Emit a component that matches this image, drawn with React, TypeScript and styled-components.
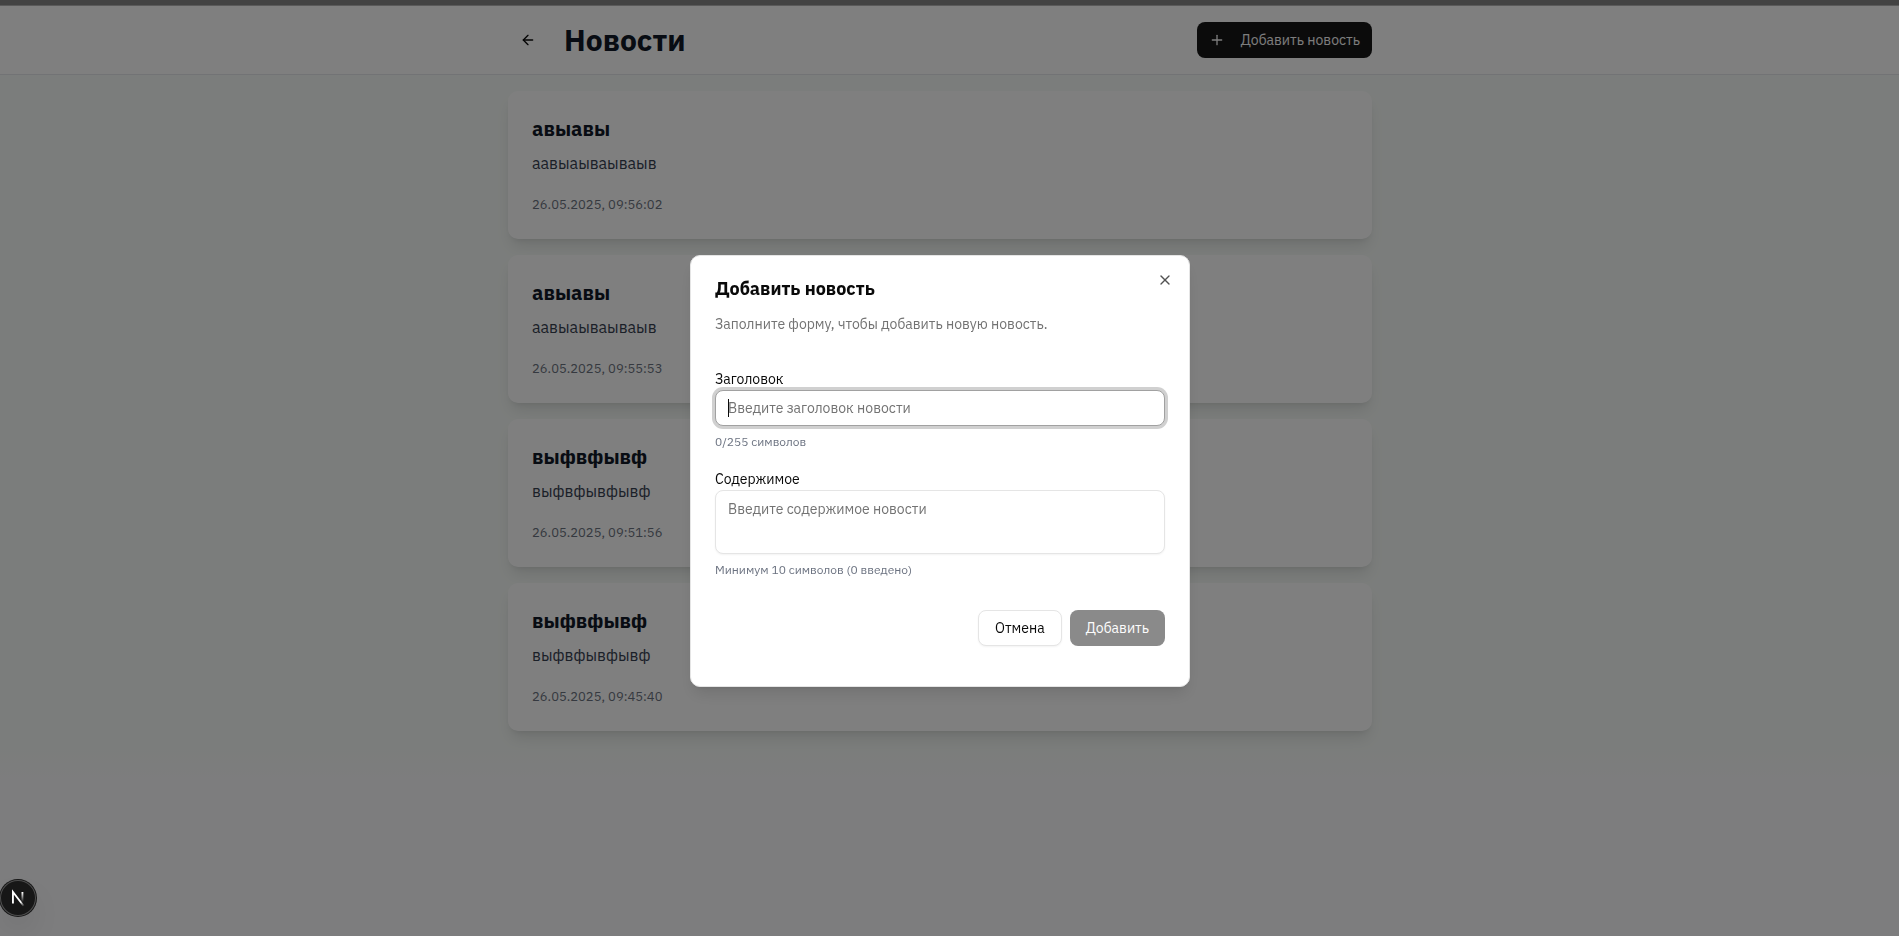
import React, { useId, useState } from 'react';
import styled, { createGlobalStyle, css } from 'styled-components';
import { ArrowLeft, Plus, X } from 'lucide-react';

const GlobalStyle = createGlobalStyle`
  *, *::before, *::after { box-sizing: border-box; }
  body {
    margin: 0;
    color: #0a0a0a;
    font-family: "IBM Plex Sans", Roboto, "Liberation Sans", sans-serif;
    font-size: 16px;
    line-height: 24px;
  }
  h1, h2, h3, p { margin: 0; }
  button, input, textarea { font: inherit; }
`;

const Page = styled.div`
  display: flex;
  flex-direction: column;
  min-height: 100vh;
  background: linear-gradient(to bottom, #f7fbf8 80%, #fbfafd 84%);
`;

const TopStrip = styled.div`
  height: 6px;
  background: #868686;
  border-bottom: 1px solid #b4b4b4;
`;

const Header = styled.header`
  padding-right: 19px;
  background: #fff;
  border-bottom: 1px solid #e5e7eb;
`;

const Container = styled.div`
  width: 100%;
  max-width: 896px;
  margin: 0 auto;
  padding: 16px;
`;

const HeaderRow = styled(Container)`
  display: flex;
  align-items: center;
  justify-content: space-between;
`;

const TitleGroup = styled.div`
  display: flex;
  align-items: center;
  gap: 16px;
`;

const PageTitle = styled.h1`
  color: #111827;
  font-size: 30px;
  font-weight: 700;
  line-height: 36px;
`;

type Variant = 'primary' | 'outline' | 'ghost';

const variants = {
  primary: css`
    color: #fafafa;
    background: #171717;
  `,
  outline: css`
    color: #0a0a0a;
    background: #fff;
    border: 1px solid #e5e5e5;
    box-shadow: 0 1px 2px rgba(0, 0, 0, 0.05);
  `,
  ghost: css`
    color: #0a0a0a;
    background: transparent;
  `,
};

const Button = styled.button<{ $variant: Variant; $compact?: boolean }>`
  display: inline-flex;
  align-items: center;
  justify-content: center;
  gap: 16px;
  height: 36px;
  padding: 0 ${(p) => (p.$compact ? 12 : 16)}px;
  border: 0;
  border-radius: 8px;
  font-size: 14px;
  line-height: 20px;
  white-space: nowrap;
  ${(p) => variants[p.$variant]}
  &:disabled { opacity: 0.5; }
`;

const Main = styled.main`
  padding-right: 19px;
`;

const NewsList = styled(Container)`
  display: flex;
  flex-direction: column;
  gap: 16px;
`;

const NewsCard = styled.article`
  padding: 24px;
  background: #fff;
  border-radius: 10px;
  box-shadow: 0 10px 15px -3px rgba(0, 0, 0, 0.1), 0 4px 6px -4px rgba(0, 0, 0, 0.1);
`;

const NewsTitle = styled.h2`
  margin-bottom: 8px;
  color: #111827;
  font-size: 20px;
  font-weight: 700;
  line-height: 28px;
`;

const NewsText = styled.p`
  margin-bottom: 20px;
  color: #374151;
`;

const NewsDate = styled.time`
  display: block;
  color: #6b7280;
  font-size: 13px;
  line-height: 20px;
`;

const Overlay = styled.div`
  position: fixed;
  inset: 0;
  display: flex;
  align-items: center;
  justify-content: center;
  padding: 6px 19px 0 0;
  background: rgba(0, 0, 0, 0.5);
`;

const Dialog = styled.div`
  position: relative;
  display: flex;
  flex-direction: column;
  gap: 16px;
  width: 100%;
  max-width: 500px;
  padding: 24px;
  background: #fff;
  border: 1px solid #e5e5e5;
  border-radius: 10px;
  box-shadow: 0 10px 15px -3px rgba(0, 0, 0, 0.1), 0 4px 6px -4px rgba(0, 0, 0, 0.1);
`;

const DialogTitle = styled.h2`
  font-size: 18px;
  font-weight: 700;
  line-height: 18px;
`;

const DialogText = styled.p`
  color: #737373;
  font-size: 14px;
  line-height: 20px;
`;

const CloseButton = styled.button`
  position: absolute;
  top: 16px;
  right: 16px;
  display: flex;
  padding: 0;
  color: #0a0a0a;
  background: none;
  border: 0;
  opacity: 0.7;
`;

const Form = styled.form`
  display: flex;
  flex-direction: column;
  gap: 16px;
  padding: 16px 0;
`;

const Field = styled.div`
  display: flex;
  flex-direction: column;
`;

const Label = styled.label`
  padding-top: 2px;
  font-size: 14px;
  line-height: 22px;
`;

const control = css`
  width: 100%;
  padding: 8px 12px;
  color: #0a0a0a;
  background: #fff;
  border: 1px solid #e5e5e5;
  border-radius: 8px;
  box-shadow: 0 1px 2px rgba(0, 0, 0, 0.05);
  font-size: 14px;
  line-height: 20px;
  outline: none;
  &::placeholder { color: #737373; opacity: 1; }
  &:focus {
    border-color: #a1a1a1;
    box-shadow: 0 0 0 3px rgba(161, 161, 161, 0.5);
  }
`;

const InputWrap = styled.div`
  position: relative;
  display: flex;
`;

const TextInput = styled.input`
  ${control}
  height: 36px;
  &:placeholder-shown { caret-color: transparent; }
`;

/* Steady caret shown while the focused field is still empty. */
const Caret = styled.span`
  position: absolute;
  top: 9px;
  left: 13px;
  display: none;
  width: 1px;
  height: 18px;
  background: #0a0a0a;
  pointer-events: none;
  ${TextInput}:focus:placeholder-shown + & { display: block; }
`;

const TextArea = styled.textarea`
  ${control}
  display: block;
  height: 64px;
  resize: none;
`;

const Hint = styled.p`
  margin-top: 8px;
  color: #6b7280;
  font-size: 12px;
  line-height: 16px;
`;

const Actions = styled.div`
  display: flex;
  justify-content: flex-end;
  gap: 8px;
  margin-top: 16px;
`;

const DevBadge = styled.button`
  position: fixed;
  bottom: 20px;
  left: 0;
  width: 36px;
  height: 36px;
  padding: 0;
  background: #171717;
  border: 0;
  border-radius: 50%;
  box-shadow: 0 0 0 1px #171717, inset 0 0 0 1px rgba(255, 255, 255, 0.24),
    0 16px 32px -8px rgba(0, 0, 0, 0.24);
  svg { display: block; }
`;

const news = [
  { title: 'авыавы', text: 'аавыаываываыв', date: '26.05.2025, 09:56:02' },
  { title: 'авыавы', text: 'аавыаываываыв', date: '26.05.2025, 09:55:53' },
  { title: 'выфвфывф', text: 'выфвфывфывф', date: '26.05.2025, 09:51:56' },
  { title: 'выфвфывф', text: 'выфвфывфывф', date: '26.05.2025, 09:45:40' },
];

function NextLogo() {
  return (
    <svg width="36" height="36" viewBox="0 0 36 36" fill="none" aria-hidden="true">
      <g transform="translate(10.6 11)">
        <path d="M13.3 15.2 L2.34 1 V12.6" stroke="url(#badge-diagonal)" strokeWidth="1.86" />
        <path d="M11.825 1 V12.6" stroke="url(#badge-stem)" strokeWidth="1.86" />
      </g>
      <defs>
        <linearGradient id="badge-diagonal" x1="9.96" y1="11.12" x2="15.48" y2="17.97" gradientUnits="userSpaceOnUse">
          <stop stopColor="#fff" />
          <stop offset="0.6" stopColor="#fff" stopOpacity="0" />
        </linearGradient>
        <linearGradient id="badge-stem" x1="11.82" y1="1.4" x2="11.79" y2="11" gradientUnits="userSpaceOnUse">
          <stop stopColor="#fff" />
          <stop offset="1" stopColor="#fff" stopOpacity="0" />
        </linearGradient>
      </defs>
    </svg>
  );
}

function AddNewsDialog() {
  const id = useId();
  const [title, setTitle] = useState('');
  const [content, setContent] = useState('');
  const valid = title.length > 0 && content.length >= 10;

  return (
    <Overlay>
      <Dialog role="dialog" aria-modal="true" aria-labelledby={`${id}-heading`}>
        <DialogTitle id={`${id}-heading`}>Добавить новость</DialogTitle>
        <DialogText>Заполните форму, чтобы добавить новую новость.</DialogText>
        <Form onSubmit={(e) => e.preventDefault()}>
          <Field>
            <Label htmlFor={`${id}-title`}>Заголовок</Label>
            <InputWrap>
              <TextInput
                id={`${id}-title`}
                autoFocus
                maxLength={255}
                placeholder="Введите заголовок новости"
                value={title}
                onChange={(e) => setTitle(e.target.value)}
              />
              <Caret />
            </InputWrap>
            <Hint>{`${title.length}/255 символов`}</Hint>
          </Field>
          <Field>
            <Label htmlFor={`${id}-content`}>Содержимое</Label>
            <TextArea
              id={`${id}-content`}
              placeholder="Введите содержимое новости"
              value={content}
              onChange={(e) => setContent(e.target.value)}
            />
            <Hint>{`Минимум 10 символов (${content.length} введено)`}</Hint>
          </Field>
          <Actions>
            <Button type="button" $variant="outline">Отмена</Button>
            <Button type="submit" $variant="primary" disabled={!valid}>Добавить</Button>
          </Actions>
        </Form>
        <CloseButton type="button" aria-label="Закрыть">
          <X size={16} />
        </CloseButton>
      </Dialog>
    </Overlay>
  );
}

export default function App() {
  return (
    <>
      <GlobalStyle />
      <Page>
        <TopStrip />
        <Header>
          <HeaderRow>
            <TitleGroup>
              <Button type="button" $variant="ghost" $compact aria-label="Назад">
                <ArrowLeft size={16} />
              </Button>
              <PageTitle>Новости</PageTitle>
            </TitleGroup>
            <Button type="button" $variant="primary" $compact>
              <Plus size={16} />
              Добавить новость
            </Button>
          </HeaderRow>
        </Header>
        <Main>
          <NewsList>
            {news.map((item) => (
              <NewsCard key={item.date}>
                <NewsTitle>{item.title}</NewsTitle>
                <NewsText>{item.text}</NewsText>
                <NewsDate>{item.date}</NewsDate>
              </NewsCard>
            ))}
          </NewsList>
        </Main>
      </Page>
      <AddNewsDialog />
      <DevBadge type="button" aria-label="Next.js">
        <NextLogo />
      </DevBadge>
    </>
  );
}
